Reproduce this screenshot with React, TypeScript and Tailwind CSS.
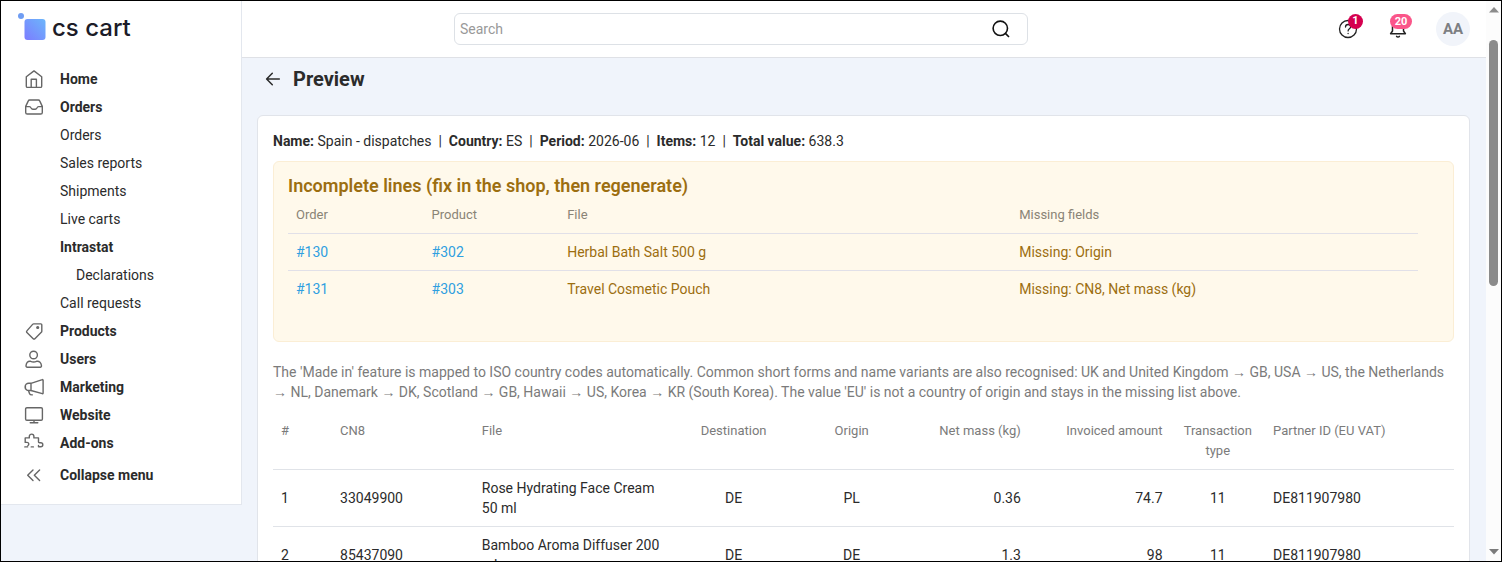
import { useState } from 'react';
import type { ReactNode } from 'react';
import clsx from 'clsx';

type MenuItem = { label: string; icon?: ReactNode; level: 0 | 1 | 2; bold?: boolean };

const menu: MenuItem[] = [
  {
    label: 'Home',
    level: 0,
    icon: <path d="M2.3 7.8 10 1.9l7.7 5.9v9.4a1.2 1.2 0 0 1-1.2 1.2h-13a1.2 1.2 0 0 1-1.2-1.2zM7.2 18.4v-8.1h5.2v8.1" />,
  },
  {
    label: 'Orders',
    level: 0,
    icon: (
      <path d="M4.3 3.9 1.7 9.4v6a1.6 1.6 0 0 0 1.6 1.6h13.4a1.6 1.6 0 0 0 1.6-1.6v-6l-2.6-5.5a1.5 1.5 0 0 0-1.3-.9H5.6a1.5 1.5 0 0 0-1.3.9zM1.7 9.6h3.7c1 0 1.3.5 1.7 1.4.4.8.9 1.2 1.7 1.2h2.4c.8 0 1.3-.4 1.7-1.2.4-.9.7-1.4 1.7-1.4h3.7" />
    ),
  },
  { label: 'Orders', level: 1 },
  { label: 'Sales reports', level: 1 },
  { label: 'Shipments', level: 1 },
  { label: 'Live carts', level: 1 },
  { label: 'Intrastat', level: 1, bold: true },
  { label: 'Declarations', level: 2 },
  { label: 'Call requests', level: 1 },
  {
    label: 'Products',
    level: 0,
    icon: (
      <>
        <path d="M9.7 2.9h7.2a.9.9 0 0 1 .9.9v6.4a1.5 1.5 0 0 1-.5 1.1l-6.4 6.4a1.2 1.2 0 0 1-1.7 0l-6.3-6.1a1.2 1.2 0 0 1 0-1.7l5.7-6.5a1.5 1.5 0 0 1 1.1-.5z" />
        <circle cx="13.7" cy="6.5" r="0.9" fill="currentColor" />
      </>
    ),
  },
  {
    label: 'Users',
    level: 0,
    icon: (
      <>
        <circle cx="9.6" cy="6" r="3.8" />
        <path d="M3.2 18.2a1.2 1.2 0 0 1-1.2-1.3c.2-3.2 1.8-5 4.6-4.6 2 .9 4 .9 6 0 2.8-.4 4.6 1.4 4.9 4.6a1.2 1.2 0 0 1-1.2 1.3z" />
      </>
    ),
  },
  {
    label: 'Marketing',
    level: 0,
    icon: <path d="M18.3 2.6 7 6.3H4.7a3.5 3.5 0 0 0 0 7.2H7l11.3 3.2a.6.6 0 0 0 .8-.6V3.2a.6.6 0 0 0-.8-.6zM7 6.3v7.2M1.4 8.2v3.6M4.4 13.5l1.2 3.2c.3.9.9 1.3 2.8 1.2" />,
  },
  {
    label: 'Website',
    level: 0,
    icon: <path d="M2.9 2.7h14.2a1.3 1.3 0 0 1 1.3 1.3v9.9a1.3 1.3 0 0 1-1.3 1.3H2.9a1.3 1.3 0 0 1-1.3-1.3V4a1.3 1.3 0 0 1 1.3-1.3zM10 15.2v2.4M6.2 17.7h7.6" />,
  },
  {
    label: 'Add-ons',
    level: 0,
    icon: (
      <path d="M1.2 9.4V4.9h4.1V3.4c0-3 4.6-3 4.6 0v1.5h4.6v4.2c0 .8.9.6 2.300.6a2 2 0 0 1 0 4h-2.300v-1.200M1.2 9.400h1.900a1.700 1.700 0 0 1 .8 3.200M.8 13.900h2.800M7.200 13.900h2.200" />
    ),
  },
];

const incomplete = [
  { order: '#130', product: '#302', file: 'Herbal Bath Salt 500 g', missing: 'Missing: Origin' },
  { order: '#131', product: '#303', file: 'Travel Cosmetic Pouch', missing: 'Missing: CN8, Net mass (kg)' },
];

const lines = [
  { cn8: '33049900', file: 'Rose Hydrating Face Cream 50 ml', dest: 'DE', origin: 'PL', mass: '0.36', amount: '74.7', type: '11', vat: 'DE811907980' },
  { cn8: '85437090', file: 'Bamboo Aroma Diffuser 200 ml', dest: 'DE', origin: 'DE', mass: '1.3', amount: '98', type: '11', vat: 'DE811907980' },
];

const summary = [
  ['Name:', 'Spain - dispatches'],
  ['Country:', 'ES'],
  ['Period:', '2026-06'],
  ['Items:', '12'],
  ['Total value:', '638.3'],
];

function MenuIcon({ children }: { children: ReactNode }) {
  return (
    <svg viewBox="0 0 20 20" className="size-5 text-[#666]" fill="none" stroke="currentColor" strokeWidth="1.4" strokeLinecap="round" strokeLinejoin="round" aria-hidden="true">
      {children}
    </svg>
  );
}

function Logo() {
  return (
    <a href="#" className="flex h-16 items-start pt-3 pl-4">
      <svg viewBox="0 0 30 30" className="size-[30px]" aria-hidden="true">
        <defs>
          <linearGradient id="logo" x1="1" y1="0" x2="0" y2="1">
            <stop offset="0" stopColor="#6cb6fb" />
            <stop offset="1" stopColor="#7c7cff" />
          </linearGradient>
        </defs>
        <circle cx="4" cy="3" r="3" fill="#6f9df3" />
        <rect x="7.500" y="6" width="21" height="21" rx="3" fill="url(#logo)" />
      </svg>
      <span className="pl-[5px] font-[Inter,sans-serif] text-2xl leading-[30px] font-medium text-[#1c1c28]">cs cart</span>
    </a>
  );
}

function Sidebar() {
  return (
    <aside className="w-[241px] shrink-0 self-start border-r border-b border-[#e3e7ee] bg-white pb-[15px]">
      <Logo />
      <nav>
        {menu.map((item) => (
          <a key={item.label + item.level} href="#" className="flex h-7 items-center">
            <span className="w-[59px] shrink-0 pl-[23px]">{item.icon && <MenuIcon>{item.icon}</MenuIcon>}</span>
            <span className={clsx((item.level === 0 || item.bold) && 'font-bold', item.level === 2 && 'pl-4')}>{item.label}</span>
          </a>
        ))}
      </nav>
      <button type="button" className="mt-1 flex h-7 w-full items-center font-bold">
        <span className="w-[59px] shrink-0 pl-[23px]">
          <MenuIcon>
            <path d="M9 4.9 3.7 10.2 9 15.5M15.6 4.9l-5.300 5.300 5.300 5.300" />
          </MenuIcon>
        </span>
        Collapse menu
      </button>
    </aside>
  );
}

function TopBar() {
  const [query, setQuery] = useState('');

  return (
    <header className="flex h-[57px] items-center border-b border-[#dfe1e6] bg-white pr-4">
      <label className="ml-[212px] flex h-8 max-w-[574px] flex-1 items-center rounded-md border border-[#dde1e6] pr-4">
        <input
          type="text"
          aria-label="Search"
          placeholder="Search"
          value={query}
          onChange={(e) => setQuery(e.target.value)}
          className="min-w-0 flex-1 pl-[5px] outline-none placeholder:text-[#999]"
        />
        <svg viewBox="0 0 20 20" className="size-5" fill="none" stroke="#111" strokeWidth="1.6" aria-hidden="true">
          <circle cx="9.3" cy="9.3" r="7.2" />
          <path d="m14.4 14.4 3.6 3.6" />
        </svg>
      </label>
      <div className="ml-auto flex items-center">
        <button type="button" aria-label="Help" className="relative mr-[30px]">
          <svg viewBox="0 0 20 20" className="size-5" fill="none" stroke="#222" strokeWidth="1.3" strokeLinecap="round" aria-hidden="true">
            <circle cx="10" cy="10" r="8.5" />
            <path d="M7.5 8c0-3.4 5.2-3.2 5.2-.2 0 2-2.6 2-2.6 4.1M10.1 14.3v.3" />
          </svg>
          <span className="absolute -top-[5px] left-[10px] size-[15px] rounded-full bg-[#d5004f] text-center text-[11px] leading-[14px] font-bold text-white">1</span>
        </button>
        <button type="button" aria-label="Notifications" className="relative mr-7">
          <svg viewBox="0 0 20 20" className="size-5" fill="none" stroke="#222" strokeWidth="1.5" strokeLinecap="round" strokeLinejoin="round" aria-hidden="true">
            <path d="M4.5 12V8a5.5 5.5 0 0 1 11 0v4l1.9 2.7H2.6zM8.6 17.300c.5.900 2.300.9 2.800 0" />
          </svg>
          <span className="absolute -top-[5px] left-[2px] h-[15px] w-[22px] rounded-full bg-[#fa5589] text-center text-[11px] leading-[15px] font-bold text-white">20</span>
        </button>
        <button type="button" aria-label="Account" className="size-[34px] rounded-full bg-[#f1f4fa] text-[15px] font-bold text-[#7d7f83]">
          AA
        </button>
      </div>
    </header>
  );
}

function IncompleteLines() {
  return (
    <section className="mt-2.5 rounded-md border border-[#fbeed5] bg-[#fff9eb] py-3.5 pr-[35px] pl-3.5 text-[#9c6e10]">
      <h2 className="text-lg leading-5 font-semibold">Incomplete lines (fix in the shop, then regenerate)</h2>
      <table className="mb-5 w-full table-fixed border-separate border-spacing-0 border-t border-transparent text-left">
        <thead>
          <tr className="text-[13px] text-[#8a8476] *:border-b *:border-[#e1e0e8] *:p-2 *:font-normal">
            <th className="w-[12%]">Order</th>
            <th className="w-[12%]">Product</th>
            <th className="w-[40%]">File</th>
            <th>Missing fields</th>
          </tr>
        </thead>
        <tbody>
          {incomplete.map((row) => (
            <tr key={row.order} className="*:border-[#e1e0e8] *:p-2 not-last:*:border-b">
              <td><a href="#" className="text-[#2f9fe0]">{row.order}</a></td>
              <td><a href="#" className="text-[#2f9fe0]">{row.product}</a></td>
              <td>{row.file}</td>
              <td>{row.missing}</td>
            </tr>
          ))}
        </tbody>
      </table>
    </section>
  );
}

function LinesTable() {
  return (
    <table className="mt-2.5 w-full table-fixed border-separate border-spacing-0 border-t border-transparent text-left">
      <thead>
        <tr className="text-[13px] text-[#7b7b7b] *:border-b *:border-[#e0e3e8] *:p-2 *:align-top *:font-normal">
          <th className="w-[5%]">#</th>
          <th className="w-[12%]">CN8</th>
          <th className="w-[17%]">File</th>
          <th className="w-[10%] text-center">Destination</th>
          <th className="w-[10%] text-center">Origin</th>
          <th className="w-[10%] text-right">Net mass (kg)</th>
          <th className="w-[12%] text-right">Invoiced amount</th>
          <th className="w-[8%] text-center">Transaction type</th>
          <th>Partner ID (EU VAT)</th>
        </tr>
      </thead>
      <tbody>
        {lines.map((line, i) => (
          <tr key={line.cn8} className="*:border-b *:border-[#e0e3e8] *:p-2">
            <td>{i + 1}</td>
            <td>{line.cn8}</td>
            <td>{line.file}</td>
            <td className="text-center">{line.dest}</td>
            <td className="text-center">{line.origin}</td>
            <td className="text-right">{line.mass}</td>
            <td className="text-right">{line.amount}</td>
            <td className="text-center">{line.type}</td>
            <td>{line.vat}</td>
          </tr>
        ))}
      </tbody>
    </table>
  );
}

function ScrollTrack() {
  return (
    <div className="flex w-[15px] shrink-0 flex-col items-center justify-between bg-[#fcfcfc] pb-1.5" aria-hidden="true">
      <div className="flex flex-col items-center gap-[27px] pt-1.5">
        <svg viewBox="0 0 10 6" className="h-[6px] w-[10px]"><path d="M5 0 10 5.5H0z" fill="#8b8b8b" /></svg>
        <div className="h-[246px] w-[9px] rounded-full bg-[#8b8b8b]" />
      </div>
      <svg viewBox="0 0 10 6" className="h-[6px] w-[10px]"><path d="M5 5.5 0 0h10z" fill="#7b7b7b" /></svg>
    </div>
  );
}

export default function App() {
  return (
    <div className="flex h-screen overflow-hidden border border-black bg-[#f0f4fb] font-[Roboto,sans-serif] text-sm/5 text-[#2b2b2b]">
      <Sidebar />

      {/* Main content */}
      <div className="min-w-0 flex-1">
        <TopBar />
        <main className="pr-4 pl-[15px]">
          <div className="flex h-[57px] items-start gap-2.5 pt-[9px] pl-1.5">
            <button type="button" aria-label="Back" className="py-0.5">
              <svg viewBox="0 0 20 20" className="size-5" fill="none" stroke="#2b2b2b" strokeWidth="1.5" strokeLinecap="round" strokeLinejoin="round" aria-hidden="true">
                <path d="M16.3 10H3.7M9.3 4.2 3.6 10l5.7 5.8" />
              </svg>
            </button>
            <h1 className="text-xl leading-6 font-bold">Preview</h1>
          </div>

          <div className="rounded-md border border-[#e1e4ea] bg-white p-[15px]">
            <p>
              {summary.map(([name, value], i) => (
                <span key={name}>
                  {i > 0 && <> &nbsp;|&nbsp; </>}
                  <strong>{name}</strong> {value}
                </span>
              ))}
            </p>
            <IncompleteLines />
            <p className="mt-5 text-[#7b7b7b]">
              The 'Made in' feature is mapped to ISO country codes automatically. Common short forms and name variants are also
              recognised: UK and United Kingdom → GB, USA → US, the Netherlands → NL, Danemark → DK, Scotland → GB, Hawaii → US,
              Korea → KR (South Korea). The value 'EU' is not a country of origin and stays in the missing list above.
            </p>
            <LinesTable />
          </div>
        </main>
      </div>

      <ScrollTrack />
    </div>
  );
}
